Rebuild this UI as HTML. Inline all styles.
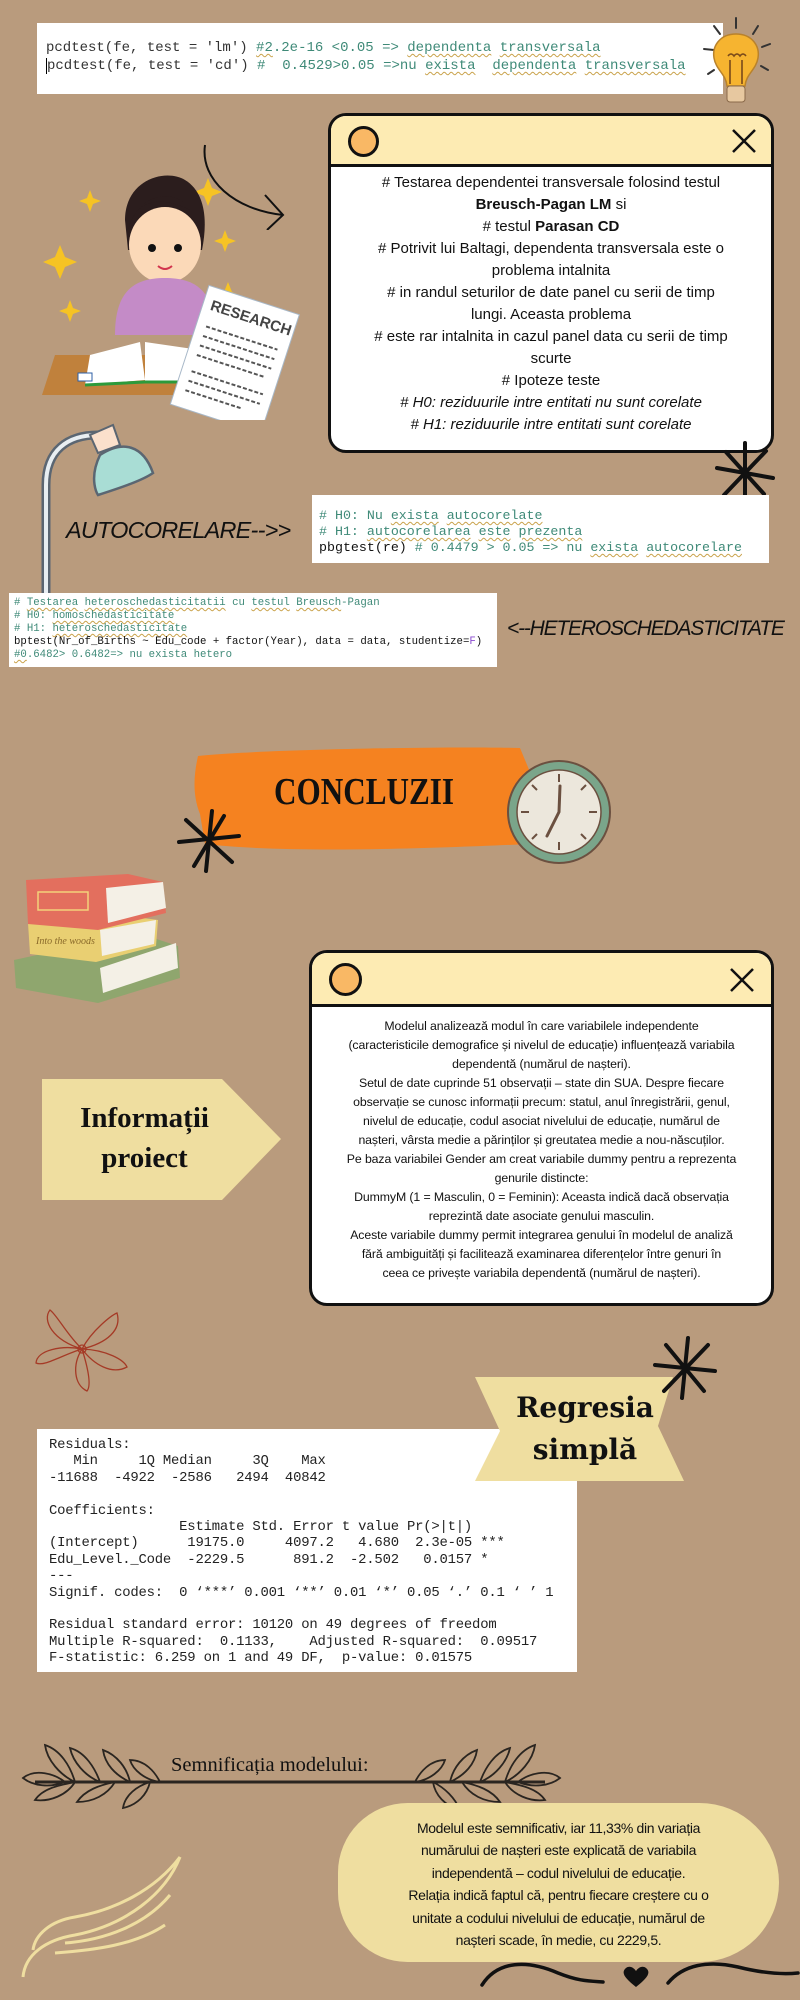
<!DOCTYPE html>
<html><head><meta charset="utf-8">
<style>
*{margin:0;padding:0;box-sizing:border-box}
html,body{width:800px;height:2000px;overflow:hidden}
body{position:relative;background:#b99b7d;font-family:"Liberation Sans",sans-serif;color:#111}
.a{position:absolute}
.code{position:absolute;background:#fff;font-family:"Liberation Mono",monospace;white-space:pre;color:#333}
.u{text-decoration:underline wavy #c9a24a;text-decoration-thickness:1px;text-underline-offset:2px}
.g{color:#3f8a78}
.win{position:absolute;background:#fff;border:3px solid #111;border-radius:18px;overflow:hidden}
.win .hd{background:#fdebb3;border-bottom:3px solid #111;position:relative}
.win .c{position:absolute;border:3px solid #111;border-radius:50%;background:#f9b865}
.win .txt{text-align:center;color:#111}
.serif{font-family:"DejaVu Serif","Liberation Serif",serif;font-weight:bold}
</style></head><body>

<!-- code box 1 -->
<div class="code" style="left:37px;top:23px;width:686px;height:71px;font-size:14px;line-height:18px;padding:16px 0 0 9px">pcdtest(fe, test = 'lm') <span class="g"><span class="u">#2</span>.2e-16 &lt;0.05 =&gt; <span class="u">dependenta</span> <span class="u">transversala</span></span>
<span style="border-left:1px solid #000">p</span>cdtest(fe, test = 'cd') <span class="g">#  0.4529&gt;0.05 =&gt;nu <span class="u">exista</span>  <span class="u">dependenta</span> <span class="u">transversala</span></span></div>

<!-- lightbulb -->
<svg class="a" style="left:698px;top:14px" width="76" height="96" viewBox="0 0 76 96">
<g stroke="#333" stroke-width="2" stroke-linecap="round"><line x1="38" y1="4" x2="38" y2="14"/><line x1="60" y1="12" x2="55" y2="20"/><line x1="72" y1="30" x2="64" y2="33"/><line x1="6" y1="35" x2="16" y2="36"/><line x1="10" y1="60" x2="16" y2="56"/><line x1="70" y1="56" x2="63" y2="52"/><line x1="16" y1="12" x2="22" y2="20"/></g>
<path d="M38 20 C22 20 14 32 16 44 C18 56 28 60 29 72 L47 72 C48 60 58 56 60 44 C62 32 54 20 38 20Z" fill="#f6b430" stroke="#b9822b" stroke-width="1.5"/>
<path d="M32 46 L32 70 M44 46 L44 70 M30 42 q3-4 6 0 q3-4 6 0 q3-4 6 0" stroke="#7a4a1a" stroke-width="1.6" fill="none"/>
<rect x="29" y="72" width="18" height="16" rx="3" fill="#e7c8a0" stroke="#8a6a4a"/>
</svg>

<!-- girl illustration -->
<svg class="a" style="left:30px;top:160px" width="270" height="260" viewBox="0 0 270 260">
<g fill="#f6c324"><path d="M30 85 l5 12 12 5 -12 5 -5 12 -5 -12 -12 -5 12 -5z"/><path d="M60 30 l3 8 8 3 -8 3 -3 8 -3 -8 -8 -3 8 -3z"/><path d="M178 18 l4 10 10 4 -10 4 -4 10 -4 -10 -10 -4 10 -4z"/><path d="M195 70 l3 8 8 3 -8 3 -3 8 -3 -8 -8 -3 8 -3z"/><path d="M40 140 l3 8 8 3 -8 3 -3 8 -3 -8 -8 -3 8 -3z"/><path d="M198 122 l4 10 10 4 -10 4 -4 10 -4 -10 -10 -4 10 -4z"/></g>
<path d="M95 60 C95 20 135 8 155 20 C175 32 178 60 172 90 L98 90 Z" fill="#2b1d1d"/>
<ellipse cx="135" cy="85" rx="36" ry="38" fill="#fbd9b8"/>
<path d="M98 70 C105 40 130 35 160 50 C150 30 110 28 98 70Z" fill="#2b1d1d"/>
<circle cx="122" cy="88" r="4" fill="#111"/><circle cx="148" cy="88" r="4" fill="#111"/>
<path d="M128 106 q7 6 14 0" stroke="#d2354d" stroke-width="2" fill="none"/>
<path d="M85 175 C85 130 105 118 135 118 C165 118 185 130 185 175Z" fill="#c48bc7"/>
<path d="M25 195 L200 195 L212 235 L12 235 Z" fill="#c0813c"/>
<path d="M60 195 L110 182 L115 220 L55 225Z" fill="#fff"/>
<path d="M115 182 L170 190 L178 222 L115 222Z" fill="#fff"/>
<path d="M55 225 L115 222 L178 222" stroke="#2c9a3b" stroke-width="3" fill="none"/>
<rect x="48" y="213" width="14" height="8" fill="#fff" stroke="#2d5fa6"/>
<g transform="rotate(18 200 190)"><rect x="160" y="135" width="95" height="125" fill="#fff" stroke="#a8b8c8"/>
<text x="168" y="158" font-family="Liberation Sans" font-weight="bold" font-size="15" fill="#444">RESEARCH</text>
<g stroke="#555" stroke-width="2" stroke-dasharray="4 2"><line x1="170" y1="175" x2="245" y2="175"/><line x1="170" y1="185" x2="245" y2="185"/><line x1="170" y1="195" x2="245" y2="195"/><line x1="170" y1="205" x2="240" y2="205"/><line x1="170" y1="222" x2="245" y2="222"/><line x1="170" y1="232" x2="245" y2="232"/><line x1="170" y1="242" x2="230" y2="242"/></g></g>
</svg>

<!-- arrow -->
<svg class="a" style="left:195px;top:140px" width="100" height="90" viewBox="0 0 100 90">
<path d="M10 5 C5 40 40 70 88 75" stroke="#111" stroke-width="2" fill="none"/>
<path d="M70 55 L88 75 L72 90" stroke="#111" stroke-width="2" fill="none"/>
</svg>

<!-- window 1 -->
<div class="win" style="left:328px;top:113px;width:446px;height:340px">
<div class="hd" style="height:51px"><div class="c" style="left:17px;top:10px;width:31px;height:31px"></div>
<svg class="a" style="right:14px;top:12px" width="26" height="26"><path d="M2 2L24 24M24 2L2 24" stroke="#111" stroke-width="2.5"/></svg></div>
<div class="txt" style="font-size:15px;line-height:22px;padding-top:5px">
# Testarea dependentei transversale folosind testul<br><b>Breusch-Pagan LM</b> si<br># testul <b>Parasan CD</b><br># Potrivit lui Baltagi, dependenta transversala este o<br>problema intalnita<br># in randul seturilor de date panel cu serii de timp<br>lungi. Aceasta problema<br># este rar intalnita in cazul panel data cu serii de timp<br>scurte<br># Ipoteze teste<br><i># H0: reziduurile intre entitati nu sunt corelate</i><br><i># H1: reziduurile intre entitati sunt corelate</i></div>
</div>

<!-- asterisk 1 -->
<svg class="a" style="left:712px;top:440px" width="66" height="66" viewBox="0 0 66 66"><g stroke="#111" stroke-width="4" stroke-linecap="round"><line x1="33" y1="3" x2="33" y2="63"/><line x1="5" y1="28" x2="61" y2="38"/><line x1="12" y1="55" x2="54" y2="11"/><line x1="14" y1="12" x2="52" y2="54"/></g></svg>

<!-- lamp -->
<svg class="a" style="left:28px;top:405px" width="130" height="200" viewBox="0 0 130 200">
<path d="M18 200 L18 80 C18 45 40 30 70 30" stroke="#5b6672" stroke-width="9" fill="none"/>
<path d="M18 200 L18 80 C18 45 40 30 70 30" stroke="#e8eef2" stroke-width="4" fill="none"/>
<path d="M62 30 L85 20 L92 40 L70 48Z" fill="#fbe0cc" stroke="#5b6672" stroke-width="2"/>
<path d="M72 50 C60 75 70 90 70 90 C95 82 115 75 125 68 C115 40 95 35 72 50Z" fill="#a9ddd5" stroke="#5b6672" stroke-width="2.5"/>
</svg>

<!-- code box 2 -->
<div class="code" style="left:312px;top:495px;width:457px;height:68px;font-size:13.3px;line-height:16px;padding:13px 0 0 7px"><span class="g"># H0: Nu <span class="u">exista</span> <span class="u">autocorelate</span>
# H1: <span class="u">autocorelarea</span> <span class="u">este</span> <span class="u">prezenta</span></span>
<span style="color:#111">pbgtest(re)</span> <span class="g"># 0.4479 &gt; 0.05 =&gt; nu <span class="u">exista</span> <span class="u">autocorelare</span></span></div>

<div class="a" style="left:66px;top:514px;font-size:23.5px;font-style:italic;line-height:32px;letter-spacing:-0.8px;color:#111;white-space:nowrap">AUTOCORELARE--&gt;&gt;</div>

<!-- code box 3 -->
<div class="code" style="left:9px;top:593px;width:488px;height:74px;font-size:10.7px;line-height:13px;padding:4px 0 0 5px"><span class="g"># <span class="u">Testarea</span> <span class="u">heteroschedasticitatii</span> cu <span class="u">testul</span> <span class="u">Breusch</span>-Pagan
# H0: <span class="u">homoschedasticitate</span>
# H1: <span class="u">heteroschedasticitate</span></span>
<span style="color:#111">bptest(Nr_of_Births ~ Edu_code + factor(Year), data = data, studentize=<span style="color:#8a4ad0">F</span>)</span>
<span class="g"><span class="u">#0</span>.6482&gt; 0.6482=&gt; nu exista hetero</span></div>

<div class="a" style="left:507px;top:614px;font-size:21px;font-style:italic;line-height:30px;letter-spacing:-1.2px;color:#111;white-space:nowrap">&lt;--HETEROSCHEDASTICITATE</div>

<!-- CONCLUZII banner -->
<svg class="a" style="left:190px;top:744px" width="350" height="112" viewBox="0 0 350 112"><path d="M8 12 C60 6 250 2 330 4 L345 40 L340 100 C250 104 100 110 15 100 L10 70 C2 50 4 30 8 12Z" fill="#f58220"/></svg>
<div class="a" style="left:194px;top:772px;width:340px;text-align:center;font-family:'Liberation Serif',serif;font-weight:bold;font-size:38px;line-height:40px;transform:scaleX(0.82);color:#111">CONCLUZII</div>

<!-- clock -->
<svg class="a" style="left:505px;top:758px" width="108" height="108" viewBox="0 0 108 108">
<circle cx="54" cy="54" r="51" fill="#7aa58a" stroke="#6b5040" stroke-width="2"/>
<circle cx="54" cy="54" r="42" fill="#ece7dc" stroke="#6b5040" stroke-width="1.5"/>
<g stroke="#6b5040" stroke-width="2"><line x1="54" y1="16" x2="54" y2="24"/><line x1="54" y1="84" x2="54" y2="92"/><line x1="16" y1="54" x2="24" y2="54"/><line x1="84" y1="54" x2="92" y2="54"/><line x1="27" y1="27" x2="32" y2="32"/><line x1="81" y1="27" x2="76" y2="32"/><line x1="27" y1="81" x2="32" y2="76"/><line x1="81" y1="81" x2="76" y2="76"/></g>
<path d="M54 54 L55 28 M54 54 L42 78" stroke="#6b5040" stroke-width="3" stroke-linecap="round"/>
</svg>

<!-- asterisk 2 -->
<svg class="a" style="left:176px;top:808px" width="66" height="66" viewBox="0 0 66 66"><g stroke="#111" stroke-width="4" stroke-linecap="round"><line x1="36" y1="3" x2="30" y2="63"/><line x1="3" y1="34" x2="63" y2="28"/><line x1="10" y1="12" x2="56" y2="54"/><line x1="48" y1="8" x2="18" y2="58"/></g></svg>

<!-- books -->
<svg class="a" style="left:8px;top:868px" width="175" height="135" viewBox="0 0 175 135">
<path d="M6 92 L130 65 L170 78 L172 110 L90 135 L8 120Z" fill="#8fa66e"/>
<path d="M92 100 L168 75 L170 100 L95 125Z" fill="#f4f0e6"/>
<path d="M20 55 L120 48 L150 52 L148 78 L88 94 L22 86Z" fill="#e9cf72"/>
<path d="M92 62 L148 52 L146 76 L94 88Z" fill="#f4f0e6"/>
<text x="28" y="76" font-family="Liberation Serif" font-style="italic" font-size="10" fill="#8a6a2a">Into the woods</text>
<path d="M18 12 L120 6 L155 14 L158 45 L90 62 L20 56Z" fill="#e36f5e"/>
<path d="M98 20 L155 14 L158 40 L100 55Z" fill="#f4f0e6"/>
<rect x="30" y="24" width="50" height="18" fill="none" stroke="#f3d27a" stroke-width="1.5"/>
</svg>

<!-- Informatii tag -->
<svg class="a" style="left:42px;top:1079px" width="240" height="121" viewBox="0 0 240 121"><path d="M0 0 L180 0 L239 60 L180 121 L0 121Z" fill="#efdea0"/></svg>
<div class="a serif" style="left:42px;top:1098px;width:205px;text-align:center;font-family:'Liberation Serif',serif;font-size:29px;line-height:40px">Informații<br>proiect</div>

<!-- window 2 -->
<div class="win" style="left:309px;top:950px;width:465px;height:356px">
<div class="hd" style="height:54px"><div class="c" style="left:17px;top:10px;width:33px;height:33px"></div>
<svg class="a" style="right:16px;top:14px" width="26" height="26"><path d="M2 2L24 24M24 2L2 24" stroke="#111" stroke-width="2.5"/></svg></div>
<div class="txt" style="font-size:12.3px;line-height:19px;padding-top:10px;letter-spacing:-0.1px">
Modelul analizează modul în care variabilele independente<br>(caracteristicile demografice și nivelul de educație) influențează variabila<br>dependentă (numărul de nașteri).<br>Setul de date cuprinde 51 observații – state din SUA. Despre fiecare<br>observație se cunosc informații precum: statul, anul înregistrării, genul,<br>nivelul de educație, codul asociat nivelului de educație, numărul de<br>nașteri, vârsta medie a părinților și greutatea medie a nou-născuților.<br>Pe baza variabilei Gender am creat variabile dummy pentru a reprezenta<br>genurile distincte:<br>DummyM (1 = Masculin, 0 = Feminin): Aceasta indică dacă observația<br>reprezintă date asociate genului masculin.<br>Aceste variabile dummy permit integrarea genului în modelul de analiză<br>fără ambiguități și facilitează examinarea diferențelor între genuri în<br>ceea ce privește variabila dependentă (numărul de nașteri).</div>
</div>

<!-- flower -->
<svg class="a" style="left:32px;top:1305px" width="100" height="88" viewBox="0 0 100 88"><g fill="none" stroke="#a53a26" stroke-width="1.3">
<path d="M50 44 C35 30 25 10 18 5 C10 15 20 35 50 44Z"/><path d="M50 44 C60 25 80 10 85 8 C90 25 75 38 50 44Z"/><path d="M50 44 C75 45 92 55 95 62 C80 70 62 60 50 44Z"/><path d="M50 44 C55 60 60 80 55 86 C42 80 40 60 50 44Z"/><path d="M50 44 C30 50 12 62 4 58 C5 45 30 40 50 44Z"/><circle cx="50" cy="44" r="4"/></g></svg>

<!-- code box 4 -->
<div class="code" style="left:37px;top:1429px;width:540px;height:243px;font-size:13.9px;line-height:16.4px;padding:8px 0 0 12px;color:#222;letter-spacing:-0.2px">Residuals:
   Min     1Q Median     3Q    Max 
-11688  -4922  -2586   2494  40842 

Coefficients:
                Estimate Std. Error t value Pr(&gt;|t|)    
(Intercept)      19175.0     4097.2   4.680  2.3e-05 ***
Edu_Level._Code  -2229.5      891.2  -2.502   0.0157 *  
---
Signif. codes:  0 ‘***’ 0.001 ‘**’ 0.01 ‘*’ 0.05 ‘.’ 0.1 ‘ ’ 1

Residual standard error: 10120 on 49 degrees of freedom
Multiple R-squared:  0.1133,	Adjusted R-squared:  0.09517 
F-statistic: 6.259 on 1 and 49 DF,  p-value: 0.01575</div>

<!-- Regresia tag (on top of code box) -->
<svg class="a" style="left:474px;top:1376px" width="212" height="106" viewBox="0 0 212 106"><path d="M1 1 L199 1 L184 50 L210 105 L1 105 L26 55Z" fill="#efdea0"/></svg>
<svg class="a" style="left:652px;top:1335px" width="66" height="66" viewBox="0 0 66 66"><g stroke="#111" stroke-width="4" stroke-linecap="round"><line x1="36" y1="3" x2="30" y2="63"/><line x1="3" y1="30" x2="63" y2="36"/><line x1="12" y1="56" x2="56" y2="10"/><line x1="14" y1="10" x2="52" y2="56"/></g></svg>
<div class="a serif" style="left:490px;top:1387px;width:190px;text-align:center;font-size:28px;line-height:42px">Regresia<br>simplă</div>

<!-- leaves ribbon -->
<svg class="a" style="left:15px;top:1740px" width="550" height="70" viewBox="0 0 550 70"><g fill="none" stroke="#2a2520" stroke-width="1.8">
<line x1="20" y1="42" x2="530" y2="42" stroke-width="3"/>
<path d="M30 5 C45 10 55 25 60 42 C45 35 32 20 30 5Z"/><path d="M55 8 C70 12 80 28 85 42 C70 36 58 22 55 8Z"/><path d="M88 10 C102 15 112 28 115 42 C100 35 90 24 88 10Z"/><path d="M115 20 C130 20 140 32 145 42 C130 40 118 30 115 20Z"/>
<path d="M8 38 C20 28 40 34 50 42 C35 48 18 46 8 38Z"/><path d="M20 60 C28 48 45 45 60 42 C52 55 35 62 20 60Z"/><path d="M62 62 C70 50 85 45 100 42 C92 55 78 62 62 62Z"/><path d="M108 68 C110 55 122 46 135 42 C132 55 122 65 108 68Z"/>
<path d="M520 5 C505 10 495 25 490 42 C505 35 518 20 520 5Z"/><path d="M495 8 C480 12 470 28 465 42 C480 36 492 22 495 8Z"/><path d="M462 10 C448 15 438 28 435 42 C450 35 460 24 462 10Z"/><path d="M430 20 C415 20 405 32 400 42 C415 40 427 30 430 20Z"/>
<path d="M545 38 C533 28 513 34 503 42 C518 48 535 46 545 38Z"/><path d="M530 60 C522 48 505 45 490 42 C498 55 515 62 530 60Z"/><path d="M485 62 C477 50 462 45 447 42 C455 55 469 62 485 62Z"/><path d="M445 70 C440 58 430 48 418 42 C420 55 430 66 445 70Z"/></g></svg>
<div class="a" style="left:171px;top:1751px;font-family:'Liberation Serif',serif;font-size:20.5px;line-height:28px;color:#111">Semnificația modelului:</div>

<!-- wing -->
<svg class="a" style="left:15px;top:1855px" width="170" height="125" viewBox="0 0 170 125"><g fill="none" stroke="#efdea0" stroke-width="3">
<path d="M165 2 C150 40 110 70 60 80 C30 85 10 100 8 122"/><path d="M165 2 C140 35 100 55 60 62 C35 66 20 80 18 95"/><path d="M155 40 C130 70 90 85 50 88"/><path d="M150 70 C120 90 80 95 40 98"/></g></svg>

<!-- blob -->
<div class="a" style="left:338px;top:1803px;width:441px;height:159px;background:#efdea0;border-radius:70px 80px 80px 70px/70px 80px 80px 70px"></div>
<div class="a" style="left:338px;top:1817px;width:441px;text-align:center;font-size:14px;line-height:22.4px;letter-spacing:-0.35px;color:#111">Modelul este semnificativ, iar 11,33% din variația<br>numărului de nașteri este explicată de variabila<br>independentă – codul nivelului de educație.<br>Relația indică faptul că, pentru fiecare creștere cu o<br>unitate a codului nivelului de educație, numărul de<br>nașteri scade, în medie, cu 2229,5.</div>

<!-- wave + heart -->
<svg class="a" style="left:478px;top:1955px" width="322" height="40" viewBox="0 0 322 40"><g fill="none" stroke="#111" stroke-width="3.5" stroke-linecap="round">
<path d="M4 30 C20 5 50 5 80 18 C100 26 110 26 125 27"/><path d="M190 28 C205 10 230 5 260 12 C280 17 300 20 320 18"/></g>
<path d="M158 32 C148 24 142 18 148 13 C152 10 156 13 158 16 C160 13 164 10 168 13 C174 18 168 24 158 32Z" fill="#111"/></svg>

</body></html>
